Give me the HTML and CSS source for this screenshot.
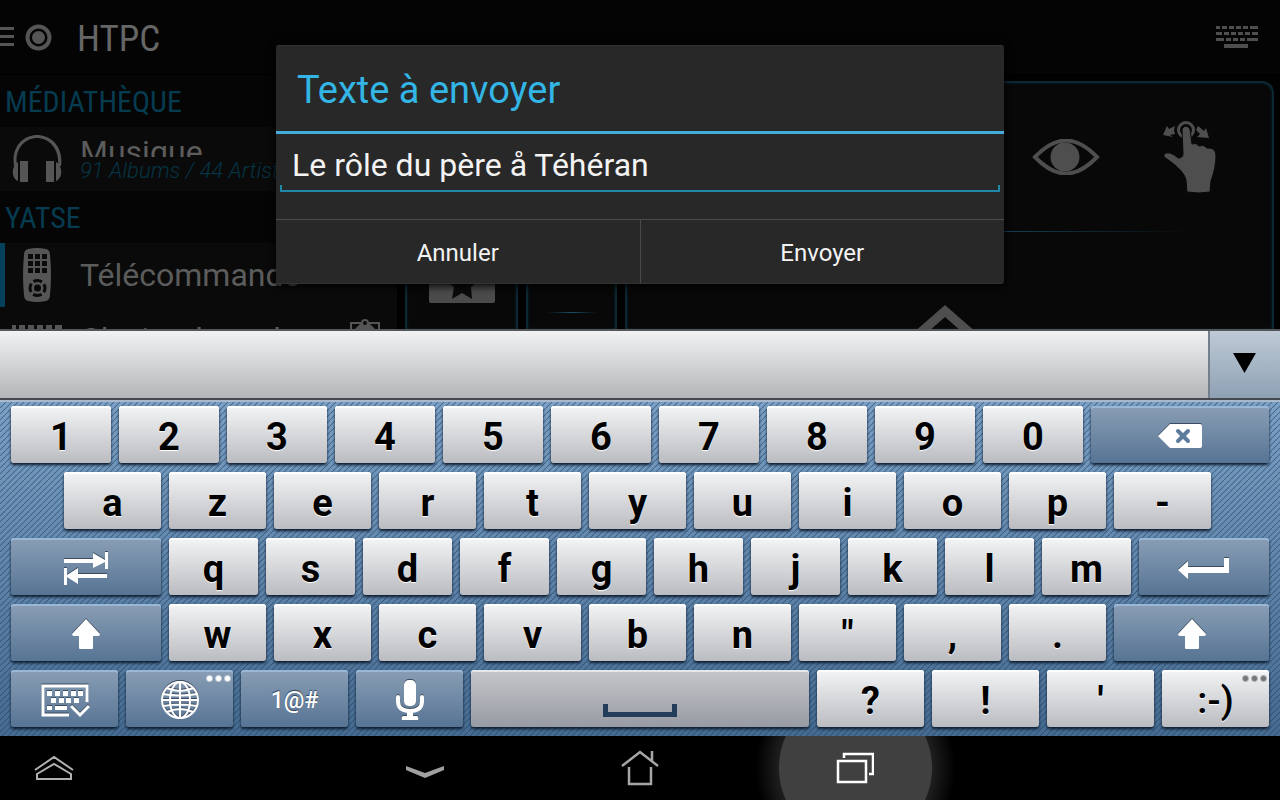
FILE: index.html
```html
<!DOCTYPE html>
<html lang="fr">
<head>
<meta charset="utf-8">
<title>Yatse</title>
<link rel="stylesheet" href="styles.css">
</head>
<body>
<div class="screen">
  <main class="app">
    <header class="topbar">
      <button class="plain menu" aria-label="Menu">
        <svg width="54" height="30" viewBox="0 0 54 30"><g fill="#555"><path d="M0 5h14v3H0zM0 13h14v3H0zM0 21h14v3H0z"/><circle cx="38.500" cy="15.500" r="6.500"/></g><circle cx="38.500" cy="15.500" r="11" fill="none" stroke="#555" stroke-width="4"/></svg>
      </button>
      <h1 class="title">HTPC</h1>
      <button class="plain" aria-label="Clavier">
        <svg width="42" height="22" viewBox="0 0 42 22" fill="#4e4e4e"><path d="M0 0h4v3H0zM6 0h5v3H6zM13 0h5v3h-5zM20 0h5v3h-5zM27 0h5v3h-5zM34 0h8v3h-8zM0 6h6v3H0zM8 6h5v3H8zM15 6h5v3h-5zM22 6h5v3h-5zM29 6h5v3h-5zM36 6h6v3h-6zM0 12h8v3H0zM10 12h5v3h-5zM17 12h5v3h-5zM24 12h5v3h-5zM31 12h11v3H31zM8 18h24v4H8z"/></svg>
      </button>
    </header>
    <div class="body">
      <nav class="side">
        <h2 class="group">MÉDIATHÈQUE</h2>
        <a class="item" href="#musique">
          <svg class="item-icon" width="50" height="50" viewBox="0 0 50 50" fill="#555"><path d="M2 32C-1 12 12 1 25 1s27 11 24 31h-3C48 15 37 4 25 4S2 15 5 32z"/><path d="M8 27h8v21H8zM34 27h8v21h-8zM6 28v19C-1 44-1 32 6 28zM44 28v19c7-3 7-15 0-19z"/></svg>
          <span class="item-text"><span class="clipped">Musique</span><em class="sub">91 Albums / 44 Artistes</em></span>
        </a>
        <h2 class="group">YATSE</h2>
        <a class="item active" href="#telecommande">
          <svg class="item-icon" width="50" height="54" viewBox="0 0 50 54"><path fill="#555" d="M16 1q9-2 18 0 4 1 4 6 2 20 0 40 0 5-4 6-9 2-18 0-4-1-4-6-2-20 0-40 0-5 4-6z"/><path fill="#0a0a0a" d="M16 6h5v5h-5zM23 6h5v5h-5zM30 6h5v5h-5zM16 13h5v5h-5zM23 13h5v5h-5zM30 13h5v5h-5zM16 20h5v5h-5zM23 20h5v5h-5zM30 20h5v5h-5z"/><circle cx="25.500" cy="40" r="7.500" fill="none" stroke="#0a0a0a" stroke-width="3" stroke-dasharray="8.800 3" stroke-dashoffset="4.400"/><circle cx="25.500" cy="40" r="3.500" fill="#0a0a0a"/></svg>
          <span class="item-text">Télécommande</span>
        </a>
        <a class="item" href="#clavier">
          <svg class="item-icon" width="50" height="28" viewBox="0 0 50 28" fill="#555"><path d="M0 0h4v5H0zM7 0h6v5H7zM16 0h6v5h-6zM25 0h6v5h-6zM34 0h6v5h-6zM43 0h7v5h-7zM0 8h7v5H0zM10 8h6v5h-6zM19 8h6v5h-6zM28 8h6v5h-6zM37 8h13v5H37zM10 22h30v5H10z"/></svg>
          <span class="item-text">Clavier de code</span>
          <svg class="item-end" width="30" height="40" viewBox="0 0 30 40" fill="none" stroke="#555"><path stroke-width="2" d="M1 4h28v30H1z"/><path fill="#555" stroke="none" d="M5 10 11 4h8l6 6z"/><circle cx="15" cy="4" r="3" fill="#0a0a0a" stroke-width="2"/></svg>
        </a>
      </nav>
      <section class="panel narrow-a">
        <svg width="66" height="44" viewBox="0 0 66 44"><rect width="66" height="44" rx="2" fill="#4b4b4b"/><path fill="#0a0a0a" d="m33 5 5 14h15L42 28l1 12-10-6-10 6 2-12-12-9h15z"/></svg>
      </section>
      <section class="panel narrow-b"><hr class="rule short"></section>
      <section class="panel wide">
        <div class="actions">
          <button class="plain" aria-label="Affichage">
            <svg width="68" height="36" viewBox="0 0 68 36"><path d="M3 18C24-4 44-4 65 18 44 40 24 40 3 18z" fill="none" stroke="#4e4e4e" stroke-width="4"/><circle cx="33" cy="18" r="14.500" fill="#4e4e4e"/></svg>
          </button>
          <button class="plain" aria-label="Gestes">
            <svg width="56" height="74" viewBox="0 0 56 74" fill="#4e4e4e"><circle cx="24" cy="10" r="7.500" fill="none" stroke="#4e4e4e" stroke-width="3"/><path stroke="#080808" stroke-width="1" d="M20 9q4-6 8 0l2 15q4-2 7 2 5-2 8 2 9-1 9 8 0 11-5 25l-1 11q-11 2-23 0l-1-12C22 51 11 43 2 37q-1-5 6-4 4 1 8 5 5 0 5-4z"/><path d="M1 15 5 6l2 3 6-3-1 4 1 4-5 1 3 2zM47 18l-12-1 3-3-4-4 2-4 6 5 2-3z"/></svg>
          </button>
        </div>
        <hr class="rule">
        <svg class="up" width="68" height="36" viewBox="0 0 68 36"><path d="M2 34 34 6l32 28" fill="none" stroke="#4e4e4e" stroke-width="9"/></svg>
      </section>
    </div>
    <div class="overlay">
      <form class="dialog" role="dialog" aria-labelledby="dlg-title">
        <h2 class="dialog-title"><label id="dlg-title" for="message">Texte à envoyer</label></h2>
        <div class="field"><input id="message" class="input" type="text" value="Le rôle du père å Téhéran"></div>
        <div class="buttons"><button class="choice" type="button">Annuler</button><button class="choice" type="button">Envoyer</button></div>
      </form>
    </div>
  </main>

  <section class="keyboard" aria-label="Clavier">
    <div class="suggest"><div class="words"></div><button class="expand" aria-label="Développer"><svg width="24" height="20" viewBox="0 0 24 20"><path d="M0 0h23L11.500 20z"/></svg></button></div>
    <div class="keys">
      <div class="row">
        <button class="key k100">1</button><button class="key k100">2</button><button class="key k100">3</button><button class="key k100">4</button><button class="key k100">5</button><button class="key k100">6</button><button class="key k100">7</button><button class="key k100">8</button><button class="key k100">9</button><button class="key k100">0</button>
        <button class="key blue k178" aria-label="Effacer"><svg width="44" height="26" viewBox="0 0 44 26"><path fill="#fff" d="M12 1h30q2 0 2 2v20q0 2-2 2H12L0 13z"/><path d="m20 8 10 10M30 8 20 18" stroke="#5d7c9d" stroke-width="4" stroke-linecap="round"/></svg></button>
      </div>
      <div class="row inset">
        <button class="key k97">a</button><button class="key k97">z</button><button class="key k97">e</button><button class="key k97">r</button><button class="key k97">t</button><button class="key k97">y</button><button class="key k97">u</button><button class="key k97">i</button><button class="key k97">o</button><button class="key k97">p</button><button class="key k97">-</button>
      </div>
      <div class="row">
        <button class="key blue k150" aria-label="Tabulation"><svg width="44" height="34" viewBox="0 0 44 34" fill="#fff"><path d="M0 8h29V2l12 7V1h3v17h-3v-7l-12 6v-5H0zM0 17h3v7l11-7v6h29v4H14v6L3 26v8H0z"/></svg></button><button class="key k89">q</button><button class="key k89">s</button><button class="key k89">d</button><button class="key k89">f</button><button class="key k89">g</button><button class="key k89">h</button><button class="key k89">j</button><button class="key k89">k</button><button class="key k89">l</button><button class="key k89">m</button>
        <button class="key blue k130" aria-label="Entrée"><svg width="52" height="22" viewBox="0 0 52 22" fill="#fff"><path d="M0 13 10 4v6h36V1h5v15H10v6z"/></svg></button>
      </div>
      <div class="row">
        <button class="key blue k150" aria-label="Majuscule"><svg width="28" height="30" viewBox="0 0 28 30" fill="#fff"><path d="M14 0 28 15q0 2-2 2h-5v12q0 1-1 1H8q-1 0-1-1V17H2q-2 0-2-2z"/></svg></button><button class="key k97">w</button><button class="key k97">x</button><button class="key k97">c</button><button class="key k97">v</button><button class="key k97">b</button><button class="key k97">n</button><button class="key k97">"</button><button class="key k97">,</button><button class="key k97">.</button>
        <button class="key blue k155" aria-label="Majuscule droite"><svg width="28" height="30" viewBox="0 0 28 30" fill="#fff"><path d="M14 0 28 15q0 2-2 2h-5v12q0 1-1 1H8q-1 0-1-1V17H2q-2 0-2-2z"/></svg></button>
      </div>
      <div class="row">
        <button class="key blue k107" aria-label="Masquer le clavier"><svg width="50" height="36" viewBox="0 0 50 36"><path fill="none" stroke="#fff" stroke-width="3" d="M29 33H3V4h44v16M31 24l9 9 9-9"/><path fill="#fff" d="M7 9h5v5H7zM15 9h5v5h-5zM23 9h5v5h-5zM31 9h5v5h-5zM38 9h5v5h-5zM11 16h5v5h-5zM19 16h5v5h-5zM26 16h5v5h-5zM34 16h5v5h-5zM7 24h5v4H7zM15 24h12v4H15z"/></svg></button><button class="key blue k107 more" aria-label="Langue"><svg width="40" height="40" viewBox="0 0 40 40" fill="none" stroke="#fff" stroke-width="2"><circle cx="20" cy="20" r="18"/><ellipse cx="20" cy="20" rx="10" ry="18"/><path d="M20 2v36M2 20h36M7 8q13 6 26 0M3 14q17 3 34 0M3 26q17-3 34 0M7 32q13-6 26 0"/></svg></button><button class="key blue k107 symbols">1@#</button><button class="key blue k107" aria-label="Saisie vocale"><svg width="28" height="42" viewBox="0 0 28 42"><rect x="8" y="1" width="12" height="26" rx="5" fill="#fff"/><path d="M2 18v4q0 10 12 10t12-10v-4" fill="none" stroke="#fff" stroke-width="4" stroke-linecap="round"/><path fill="#fff" d="M11 32h6v5h4q2 1 1 4H6q-1-3 1-4h4z"/></svg></button>
        <button class="key space k338" aria-label="Espace"><svg width="74" height="14" viewBox="0 0 74 14"><path fill="#233d5a" d="M0 0h5v8h64V0h5v13H0z"/></svg></button>
        <button class="key k107">?</button><button class="key k107">!</button><button class="key k107">'</button><button class="key k107 more smiley">:-)</button>
      </div>
    </div>
  </section>

  <nav class="system" aria-label="Système">
    <button class="sys" aria-label="Applications"><svg width="40" height="26" viewBox="0 0 40 26" fill="none" stroke="#b0b0b0" stroke-width="2"><path d="M1 15 20 2l19 13M3 19 20 9l17 10v5H3z"/></svg></button>
    <div class="sys-main">
      <button class="sys" aria-label="Masquer"><svg class="low" width="40" height="14" viewBox="0 0 40 14"><path d="m1 1 19 7 19-7v4l-19 8L1 5z" fill="#a0a0a0"/></svg></button>
      <button class="sys" aria-label="Accueil"><svg width="38" height="36" viewBox="0 0 38 36" fill="none" stroke="#a6a6a6" stroke-width="2.500"><path d="M1 16 19 2l18 14M31 11V1M8 17v17h22V17"/></svg></button>
      <button class="sys pressed" aria-label="Applications récentes"><svg width="38" height="32" viewBox="0 0 38 32" fill="none" stroke="#fff" stroke-width="2.500"><path d="M2 9h28v21H2zM8 6V2h29v20h-4"/></svg></button>
    </div>
  </nav>
</div>
</body>
</html>
```
FILE: styles.css
```css
* { box-sizing: border-box; }
body { margin: 0; background: #000; font-family: Roboto, "Noto Sans", sans-serif; }
button { font: inherit; border: 0; padding: 0; background: none; color: inherit; }
svg { display: block; flex: none; }
h1, h2 { margin: 0; font-weight: 400; }

.screen { display: flex; flex-direction: column; height: 100vh; overflow: hidden; }

.app { position: relative; flex: 1; min-height: 0; display: flex; flex-direction: column; overflow: hidden; background: #010101; }
.topbar { flex: none; display: flex; align-items: center; gap: 23px; height: 75px; padding-right: 22px; background: #040404; border-bottom: 1px solid #000; }
.title { flex: 1; padding-top: 3px; font-family: "Roboto Condensed", "Liberation Sans Narrow", Roboto, sans-serif; font-size: 37px; line-height: 48px; color: #666; }
.body { flex: 1; min-height: 0; display: flex; gap: 8px; padding-right: 6px; overflow: hidden; }
.side { flex: none; width: 397px; background: #050505; overflow: hidden; white-space: nowrap; }
.group { height: 52px; padding: 2px 0 0 5px; font-family: "Roboto Condensed", "Liberation Sans Narrow", Roboto, sans-serif; font-size: 30px; line-height: 50px; color: #063b50; }
.item { display: flex; align-items: center; gap: 18px; height: 64px; padding-left: 12px; background: #0a0a0a; color: #5c5c5c; font-size: 32px; line-height: 38px; text-decoration: none; }
.item.active { border-left: 5px solid #05405a; padding-left: 7px; }
.item-text { display: flex; flex-direction: column; }
.item-end { margin-left: auto; margin-right: 17px; }
.clipped { height: 24px; overflow: hidden; }
.sub { font-size: 22px; line-height: 28px; font-weight: 300; color: #063444; }
.panel { display: flex; flex-direction: column; align-items: center; margin-top: 6px; background: #080808; border: 2px solid #0c2833; border-bottom: 0; border-radius: 12px 12px 0 0; box-shadow: inset 0 0 3px #0a2732; }
.narrow-a { flex: none; width: 113px; padding-top: 176px; }
.narrow-b { flex: none; width: 91px; padding-top: 229px; }
.wide { flex: 1; }
.actions { align-self: stretch; flex: none; display: flex; justify-content: flex-end; align-items: center; gap: 62px; height: 148px; padding-right: 54px; }
.rule { flex: none; width: 480px; height: 1px; margin: 0; border: 0; background: linear-gradient(90deg, transparent, #17506a, transparent); }
.short { width: 50px; }
.up { margin: 73px 9px 0 0; }

.overlay { position: absolute; inset: 0; display: grid; place-items: center; }
.dialog { width: 728px; max-width: 90%; background: #282828; border: 1px solid #333; border-width: 1px 0; border-radius: 3px; box-shadow: 0 2px 8px #000; color: #f3f3f3; }
.dialog-title { padding: 4px 0 0 21px; border-bottom: 3px solid #45addb; font-size: 38px; line-height: 81px; color: #33b5e5; }
.field { height: 85px; padding: 2px 4px 0; }
.input { display: block; width: 100%; height: 56px; padding: 4px 12px 0; border: 0; border-bottom: 2px solid #1f87a8; background: linear-gradient(#1f87a8, #1f87a8) 0 100% / 2px 5px no-repeat, linear-gradient(#1f87a8, #1f87a8) 100% 100% / 2px 5px no-repeat; color: #f3f3f3; font: 32px Roboto, sans-serif; outline: 0; }
.buttons { display: flex; border-top: 1px solid #4a4a4a; }
.choice { flex: 1; height: 63px; padding-top: 2px; font-size: 24px; }
.choice + .choice { border-left: 1px solid #4a4a4a; }

.keyboard { flex: none; }
.suggest { display: flex; height: 71px; border-top: 2px solid #55565a; border-bottom: 2px solid #45484e; }
.words { flex: 1; background: linear-gradient(#f1f2f4, #b4b5b8); }
.expand { width: 72px; display: grid; place-items: center; border-left: 2px solid #73808c; background: linear-gradient(#becad5, #8ea1b4); }
.expand svg { margin-bottom: 4px; }
.keys { display: flex; flex-direction: column; gap: 9px; padding: 4px 11px 9px; border-top: 2px solid #a9b9cb; background: linear-gradient(135deg, transparent 40%, #1e3d5c88 50%, transparent 60%) 0 0 / 6px 6px, linear-gradient(#7ba0c5, #466b91); }
.row { display: flex; gap: 8px; }
.inset { padding: 0 58px 0 53px; }
.key { position: relative; min-width: 0; height: 57px; padding-top: 5px; display: flex; align-items: center; justify-content: center; border-radius: 3px; background: linear-gradient(#f3f4f5, #bbbcc1); box-shadow: inset 0 2px 0 #fff, 0 2px 3px #0b1a2c; color: #000; font-size: 38px; font-weight: 700; line-height: 44px; text-shadow: 0 1px 1px #fff; }
.blue { padding-top: 2px; background: linear-gradient(#899eb5, #577494); box-shadow: inset 0 2px 0 #9ab8d6, 0 2px 3px #0b1a2c; color: #fff; }
.blue svg { filter: drop-shadow(0 -1px 0 #3c4c5e); }
.symbols { padding-top: 4px; font-size: 23px; font-weight: 500; text-shadow: 0 -1px 1px #2c3e52; }
.space { align-items: flex-end; padding-bottom: 9px; background: linear-gradient(#c5c6cb, #989ba3); box-shadow: inset 0 2px 0 #e6e7ea, 0 2px 3px #0b1a2c; }
.smiley { font-size: 37px; font-weight: 600; }
.more::after { content: ""; position: absolute; top: 5px; right: 1px; width: 27px; height: 7px; background: radial-gradient(circle, #fff 2px, transparent 4px) 0 0 / 9px 7px; }
.smiley::after { background-image: radial-gradient(circle, #74787d 2px, transparent 4px); }
.k89 { flex: 89 1 0; } .k97 { flex: 97 1 0; } .k100 { flex: 100 1 0; } .k107 { flex: 107 1 0; }
.k130 { flex: 130 1 0; } .k150 { flex: 150 1 0; } .k155 { flex: 155 1 0; } .k178 { flex: 178 1 0; } .k338 { flex: 338 1 0; }

.system { flex: none; display: grid; grid-template-columns: 1fr 645px 1fr; height: 64px; background: #000; }
.system > .sys { justify-self: start; width: 108px; }
.sys-main { display: flex; }
.sys { flex: 1; display: grid; place-items: center; }
.low { margin-top: 8px; }
.pressed { background: radial-gradient(circle, #404040 76px, #1e1e1e 77px, #000 100px); }
```
